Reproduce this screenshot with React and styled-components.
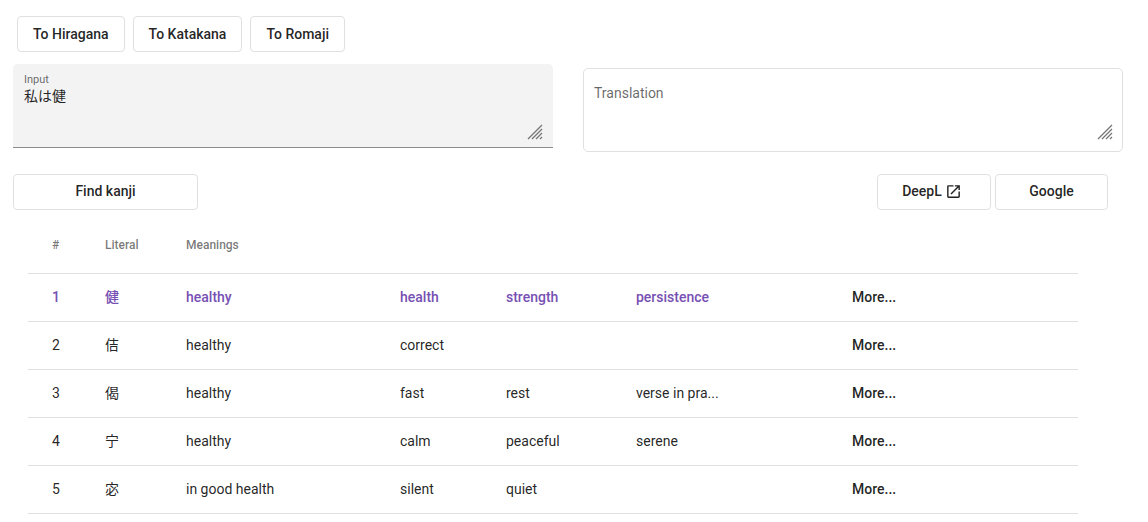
import React, { useState } from "react";
import styled, { createGlobalStyle, css } from "styled-components";

const GlobalStyle = createGlobalStyle`
  *, *::before, *::after { box-sizing: border-box; }
  body {
    margin: 0;
    background: #fff;
    color: rgba(0, 0, 0, 0.87);
    font-family: Roboto, "Noto Sans CJK JP", sans-serif;
    font-size: 14px;
    line-height: 20px;
  }
`;

const Page = styled.main`
  padding: 16px 25px 0 13px;
`;

const ConvertBar = styled.div`
  display: flex;
  gap: 8px;
  padding: 0 4px;
`;

const buttonLook = css`
  display: inline-flex;
  align-items: center;
  justify-content: center;
  gap: 3px;
  height: 36px;
  padding: 0 15px;
  border: 1px solid #e0e0e0;
  border-radius: 4px;
  background: #fff;
  color: inherit;
  font: inherit;
  font-weight: 500;
  text-decoration: none;
  cursor: pointer;
`;

const OutlineButton = styled.button`
  ${buttonLook}
`;

const FindButton = styled(OutlineButton)`
  width: 185px;
  padding-bottom: 2px;
`;

const OutlineLink = styled.a`
  ${buttonLook}
  width: ${(p) => p.$width}px;
  padding-bottom: 2px;
`;

const Fields = styled.div`
  display: grid;
  grid-template-columns: 1fr 1fr;
  align-items: end;
  gap: 30px;
  padding-top: 12px;
`;

const Field = styled.div`
  display: flex;
  flex-direction: column;
  position: relative;
  height: 84px;
  padding: 8px 10px;
  ${(p) =>
    p.$outlined
      ? css`
          margin-top: 4px;
          border: 1px solid #e0e0e0;
          border-radius: 5px;
        `
      : css`
          margin-bottom: 4px;
          background: #f3f3f3;
          border-bottom: 1px solid #8c8c8c;
          border-radius: 5px 5px 0 0;
        `}
`;

const FieldLabel = styled.label`
  padding-left: 1px;
  color: rgba(0, 0, 0, 0.6);
  font-size: 11px;
  line-height: 15px;
`;

const FieldText = styled.textarea`
  flex: 1;
  width: 100%;
  min-height: 0;
  padding: 0 0 0 1px;
  border: 0;
  outline: 0;
  resize: none;
  background: transparent;
  color: inherit;
  font: inherit;
  line-height: 18px;
  ${(p) => p.$inset && "padding: 7px 0 0;"}

  &::placeholder {
    color: rgba(0, 0, 0, 0.6);
    opacity: 1;
  }
`;

const Grip = styled.svg`
  position: absolute;
  right: ${(p) => (p.$outlined ? 9 : 10)}px;
  bottom: ${(p) => (p.$outlined ? 11 : 7)}px;
  width: 16px;
  height: 16px;
  stroke: #757575;
  stroke-width: 1.3;
  fill: none;
  pointer-events: none;
`;

const Actions = styled.div`
  display: flex;
  justify-content: space-between;
  padding: 22px 15px 0 0;
`;

const LinkGroup = styled.nav`
  display: flex;
  gap: 4px;
`;

const LaunchIcon = styled.svg`
  width: 17px;
  height: 17px;
  margin-right: 4px;
`;

const ResultArea = styled.section`
  padding: 8px 45px 0 15px;
`;

const KanjiTable = styled.table`
  width: 100%;
  table-layout: fixed;
  border-collapse: separate;
  border-spacing: 0;
`;

const Col = styled.col`
  ${(p) => p.$width && `width: ${p.$width}px;`}
`;

const cellLook = css`
  padding: 0 0 2px;
  border-bottom: 1px solid #e0e0e0;
  text-align: left;
  white-space: nowrap;
  &:first-child { padding-left: 24px; }
`;

const HeadCell = styled.th`
  ${cellLook}
  height: 56px;
  color: rgba(0, 0, 0, 0.54);
  font-size: 12px;
  font-weight: 500;
`;

const Cell = styled.td`
  ${cellLook}
  height: 48px;
`;

const Row = styled.tr`
  ${(p) => p.$known && "color: #7750b3; font-weight: 500;"}
`;

const MoreButton = styled.button`
  display: block;
  padding: 0;
  border: 0;
  background: none;
  color: rgba(0, 0, 0, 0.87);
  font: inherit;
  font-weight: 500;
  cursor: pointer;
`;

const results = [
  { literal: "健", meanings: ["healthy", "health", "strength", "persistence"], known: true },
  { literal: "佶", meanings: ["healthy", "correct", "", ""] },
  { literal: "偈", meanings: ["healthy", "fast", "rest", "verse in pra..."] },
  { literal: "宁", meanings: ["healthy", "calm", "peaceful", "serene"] },
  { literal: "宓", meanings: ["in good health", "silent", "quiet", ""] },
];

const columnWidths = [77, 81, 214, 106, 130, 216, null];

function ResizeGrip({ outlined }) {
  return (
    <Grip $outlined={outlined} viewBox="0 0 16 16" aria-hidden="true">
      <path d="M1 15 15 1M5 15 15 5M9 15l6-6M13 15l2-2" />
    </Grip>
  );
}

function OpenIcon() {
  return (
    <LaunchIcon viewBox="0 0 24 24" fill="currentColor" aria-hidden="true">
      <path d="M19 19H5V5h7V3H5a2 2 0 0 0-2 2v14a2 2 0 0 0 2 2h14c1.1 0 2-.9 2-2v-7h-2v7zM14 3v2h3.59l-9.83 9.83 1.41 1.41L19 6.41V10h2V3h-7z" />
    </LaunchIcon>
  );
}

export default function App() {
  const [text, setText] = useState("私は健");
  const [translation, setTranslation] = useState("");

  return (
    <Page lang="ja">
      <GlobalStyle />
      <ConvertBar>
        <OutlineButton type="button">To Hiragana</OutlineButton>
        <OutlineButton type="button">To Katakana</OutlineButton>
        <OutlineButton type="button">To Romaji</OutlineButton>
      </ConvertBar>
      <Fields>
        <Field>
          <FieldLabel htmlFor="input">Input</FieldLabel>
          <FieldText id="input" value={text} onChange={(e) => setText(e.target.value)} />
          <ResizeGrip />
        </Field>
        <Field $outlined>
          <FieldText
            $inset
            aria-label="Translation"
            placeholder="Translation"
            value={translation}
            onChange={(e) => setTranslation(e.target.value)}
          />
          <ResizeGrip outlined />
        </Field>
      </Fields>
      <Actions>
        <FindButton type="button">Find kanji</FindButton>
        <LinkGroup>
          <OutlineLink href="#deepl" $width={114}>DeepL <OpenIcon /></OutlineLink>
          <OutlineLink href="#google" $width={113}>Google</OutlineLink>
        </LinkGroup>
      </Actions>
      <ResultArea>
        <KanjiTable>
          <colgroup>
            {columnWidths.map((w, i) => <Col key={i} $width={w} />)}
          </colgroup>
          <thead>
            <tr>
              <HeadCell scope="col">#</HeadCell>
              <HeadCell scope="col">Literal</HeadCell>
              <HeadCell scope="col" colSpan={5}>Meanings</HeadCell>
            </tr>
          </thead>
          <tbody>
            {results.map((r, i) => (
              <Row key={r.literal} $known={r.known}>
                <Cell>{i + 1}</Cell>
                <Cell>{r.literal}</Cell>
                {r.meanings.map((m, j) => <Cell key={j}>{m}</Cell>)}
                <Cell><MoreButton type="button">More...</MoreButton></Cell>
              </Row>
            ))}
          </tbody>
        </KanjiTable>
      </ResultArea>
    </Page>
  );
}
